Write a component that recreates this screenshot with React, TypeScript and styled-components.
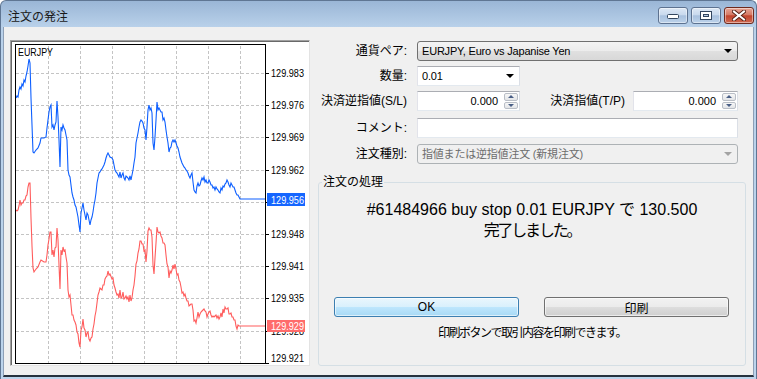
import styled, { createGlobalStyle } from "styled-components";

const UI = `"Liberation Sans", "Noto Sans CJK JP", sans-serif`;

const GlobalStyle = createGlobalStyle`
  html, body { margin: 0; padding: 0; background: #fff; }
  body { font-family: ${UI}; }
  * { box-sizing: border-box; }
`;

// chart data (page coordinates)
const BLUE: [number, number][] = [
  [16,98],[17,96],[18,97],[19,90],[20,87],[21,89],[22,84],[23,86],[24,80],[25,82],[26,76],[27,72],[28,66],[29,59],[30,63],[31,98],[32,125],[33,152],[34,153],[36,150],[38,148],[40,143],[41,138],[44,138],[46,137],[47,128],[48,120],[49,112],[50,107],[51,105],[52,127],[53,125],[54,130],[55,125],[56,122],[57,101],[58,117],[59,140],[60,167],[61,127],[62,130],[63,125],[64,128],[65,130],[66,135],[67,140],[68,170],[69,175],[70,177],[71,185],[72,193],[73,197],[74,200],[75,205],[76,207],[77,212],[78,217],[79,225],[80,232],[81,213],[82,208],[83,203],[84,210],[85,215],[86,220],[87,213],[88,215],[89,220],[90,225],[91,220],[92,217],[93,212],[94,205],[95,200],[96,193],[97,183],[98,178],[99,173],[100,172],[101,170],[102,169],[103,167],[104,165],[105,162],[106,158],[107,155],[108,153],[109,155],[110,157],[112,158],[113,160],[114,165],[115,170],[116,172],[117,173],[118,175],[119,177],[120,172],[121,178],[122,175],[123,173],[124,178],[125,180],[126,176],[127,177],[128,178],[129,180],[130,176],[131,180],[132,175],[133,170],[134,163],[135,157],[136,143],[137,138],[138,133],[139,127],[140,122],[141,120],[142,121],[143,123],[144,128],[145,130],[146,140],[147,127],[148,110],[149,105],[150,110],[151,108],[152,113],[153,143],[154,150],[155,137],[156,120],[157,102],[158,110],[159,108],[160,110],[161,112],[162,112],[163,120],[164,118],[165,122],[166,130],[167,137],[168,143],[169,152],[170,148],[171,147],[172,142],[173,140],[174,142],[175,140],[176,143],[177,146],[178,148],[179,152],[180,157],[181,160],[182,163],[183,165],[184,167],[185,168],[186,170],[187,171],[188,173],[189,176],[190,178],[191,175],[192,173],[193,182],[194,190],[195,192],[196,193],[197,186],[198,183],[199,186],[200,185],[201,181],[202,178],[203,180],[204,177],[205,182],[206,180],[207,183],[208,183],[209,180],[210,182],[211,185],[212,185],[213,188],[214,187],[215,190],[216,187],[217,189],[218,190],[219,192],[220,193],[221,188],[222,190],[223,186],[224,187],[225,184],[226,183],[227,180],[228,182],[229,185],[230,187],[231,183],[232,185],[233,187],[234,187],[235,190],[236,193],[237,195],[238,195],[239,197],[240,199],[265,199],
];

const SPREAD: [number, number][] = [
  [16,112],[29,123],[33,117],[50,127],[80,117],[150,122],[208,132],[223,124],[236,133],[240,127],[265,127],
];

const spreadAt = (x: number) => {
  for (let i = 0; i < SPREAD.length - 1; i++) {
    const [x0, o0] = SPREAD[i];
    const [x1, o1] = SPREAD[i + 1];
    if (x >= x0 && x <= x1) return o0 + ((o1 - o0) * (x - x0)) / (x1 - x0);
  }
  return 127;
};

const RED = BLUE.map(([x, y]) => [x, Math.round(y + spreadAt(x) + (x < 238 ? ((x * 7) % 5) - 2 : 0))]);

const toPoints = (pts: number[][]) => pts.map((p) => p.join(",")).join(" ");

// null = level whose label sits fully under the current-price tag
const PRICES = ["129.983", "129.976", "129.969", "129.962", null, "129.948", "129.941", "129.935", "129.928", "129.921"];
const GRID_X = [48, 80, 112, 144, 176, 208, 240];
const levelY = (i: number) => Math.round(73 + i * 32.2);

const Chart = () => (
  <svg width="298" height="324" style={{ display: "block" }}>
    <defs>
      <clipPath id="plot">
        <rect x="16" y="45" width="249" height="318" />
      </clipPath>
    </defs>
    <g transform="translate(-11,-41)">
      <g stroke="#c4c4c4" strokeDasharray="3 2" strokeWidth="1">
        {GRID_X.map((x) => (
          <line key={x} x1={x + 0.5} y1="46" x2={x + 0.5} y2="363" />
        ))}
        {PRICES.slice(0, 9).map((_, i) => (
          <line key={i} x1="16" y1={levelY(i) + 0.5} x2="265" y2={levelY(i) + 0.5} />
        ))}
      </g>
      <g clipPath="url(#plot)" fill="none" strokeWidth="1.1">
        <polyline points={toPoints(BLUE)} stroke="#0d5fff" />
        <polyline points={toPoints(RED)} stroke="#ff5c5c" />
      </g>
      <rect x="15.5" y="44.5" width="250" height="319" fill="none" stroke="#000" />
      <text x="18" y="52" fontSize="10.5" fontFamily="Liberation Sans, sans-serif" dominantBaseline="central" textLength="35" lengthAdjust="spacingAndGlyphs">EURJPY</text>
      {PRICES.map((p, i) => (
        <g key={i}>
          <line x1="265" y1={levelY(i) + 0.5} x2="269" y2={levelY(i) + 0.5} stroke="#000" />
          {p && (
            <text x="271" y={Math.min(levelY(i), 358)} fontSize="10.5" fontFamily="Liberation Sans, sans-serif" dominantBaseline="central" textLength="33" lengthAdjust="spacingAndGlyphs">{p}</text>
          )}
        </g>
      ))}
      <rect x="267" y="193" width="38" height="13" fill="#1566ff" />
      <text x="271" y="199.5" fontSize="10.5" fill="#fff" fontFamily="Liberation Sans, sans-serif" dominantBaseline="central" textLength="33" lengthAdjust="spacingAndGlyphs">129.956</text>
      <rect x="267" y="320" width="38" height="12" fill="#ff6b6b" />
      <text x="271" y="326" fontSize="10.5" fill="#fff" fontFamily="Liberation Sans, sans-serif" dominantBaseline="central" textLength="33" lengthAdjust="spacingAndGlyphs">129.929</text>
    </g>
  </svg>
);

const MinIcon = () => (
  <svg width="12" height="6" viewBox="0 0 12 6">
    <rect x="0.5" y="0.5" width="11" height="4" rx="1" fill="#fff" stroke="#33465f" />
  </svg>
);

const MaxIcon = () => (
  <svg width="12" height="9" viewBox="0 0 12 9">
    <rect x="0.5" y="0.5" width="11" height="8" fill="#fff" stroke="#33465f" />
    <rect x="3.5" y="3.5" width="5" height="2" fill="#b7cbe3" stroke="#33465f" />
  </svg>
);

const CloseIcon = () => (
  <svg width="14" height="11" viewBox="0 0 14 11">
    <path d="M2 1.5 L12 9.5 M12 1.5 L2 9.5" stroke="#5a2418" strokeWidth="4" strokeLinecap="square" />
    <path d="M2 1.5 L12 9.5 M12 1.5 L2 9.5" stroke="#fff" strokeWidth="2" strokeLinecap="square" />
  </svg>
);

export default function App() {
  return (
    <>
      <GlobalStyle />
      <Window>
        <TitleBar>
          <Title>注文の発注</Title>
          <CaptionButtons>
            <CaptionButton $close={false} $align="end">
              <MinIcon />
            </CaptionButton>
            <CaptionButton $close={false} $align="center">
              <MaxIcon />
            </CaptionButton>
            <CaptionButton $close $align="center">
              <CloseIcon />
            </CaptionButton>
          </CaptionButtons>
        </TitleBar>
        <Client>
          <ChartPanel>
            <Chart />
          </ChartPanel>
          <FormColumn>
            <Row>
              <Label>通貨ペア:</Label>
              <Combo $kind="button">
                <span>EURJPY, Euro vs Japanise Yen</span>
                <Caret $color="#000" />
              </Combo>
            </Row>
            <Row $top={5}>
              <Label>数量:</Label>
              <Combo $kind="edit" $width={103}>
                <span>0.01</span>
                <Caret $color="#000" />
              </Combo>
            </Row>
            <Row $top={5}>
              <Label>決済逆指値(S/L)</Label>
              <SpinBox $width={103}>
                <SpinValue>0.000</SpinValue>
                <Spinner>
                  <SpinHalf>
                    <SpinArrow $up />
                  </SpinHalf>
                  <SpinHalf>
                    <SpinArrow $up={false} />
                  </SpinHalf>
                </Spinner>
              </SpinBox>
              <SideLabel>決済指値(T/P)</SideLabel>
              <SpinBox $width={105}>
                <SpinValue>0.000</SpinValue>
                <Spinner>
                  <SpinHalf>
                    <SpinArrow $up />
                  </SpinHalf>
                  <SpinHalf>
                    <SpinArrow $up={false} />
                  </SpinHalf>
                </Spinner>
              </SpinBox>
            </Row>
            <Row $top={7}>
              <Label>コメント:</Label>
              <TextBox />
            </Row>
            <Row $top={6}>
              <Label>注文種別:</Label>
              <Combo $kind="disabled">
                <span>指値または逆指値注文 (新規注文)</span>
                <Caret $color="#a3a3a3" />
              </Combo>
            </Row>
            <GroupBox>
              <Legend>注文の処理</Legend>
              <Message>
                <div>#61484966 buy stop 0.01 EURJPY で 130.500</div>
                <Done>完了しました。</Done>
              </Message>
              <ButtonRow>
                <PushButton $primary>OK</PushButton>
                <PushButton $primary={false}>印刷</PushButton>
              </ButtonRow>
              <Hint>印刷ボタンで取引内容を印刷できます。</Hint>
            </GroupBox>
          </FormColumn>
        </Client>
      </Window>
    </>
  );
}

const Window = styled.div`
  width: 757px;
  height: 379px;
  border: 1px solid #5f7693;
  border-bottom: none;
  border-radius: 6px 6px 0 0;
  background: linear-gradient(#9ab6d6 0px, #b9d1ea 26px, #bcd4ec 100%);
  display: flex;
  flex-direction: column;
  overflow: hidden;
`;

const TitleBar = styled.div`
  height: 26px;
  flex: none;
  display: flex;
  justify-content: space-between;
  align-items: flex-start;
  padding-left: 7px;
`;

const Title = styled.div`
  font-family: "Noto Sans CJK JP", sans-serif;
  font-size: 12px;
  line-height: 16px;
  padding-top: 7px;
  color: #1a1a1a;
`;

const CaptionButtons = styled.div`
  display: flex;
  gap: 3px;
  margin-top: 6px;
  margin-right: 2px;
`;

const CaptionButton = styled.div<{ $close: boolean; $align: "end" | "center" }>`
  width: 30px;
  height: 17px;
  border-radius: 3px;
  border: 1px solid ${(p) => (p.$close ? "#6e2a1e" : "#5d7290")};
  background: ${(p) =>
    p.$close
      ? "linear-gradient(#e6a596 0%, #d67b66 45%, #c2442d 52%, #cf6a52 100%)"
      : "linear-gradient(#dde8f5 0%, #c9d9ed 45%, #a9c1de 52%, #bcd2ea 100%)"};
  box-shadow: inset 0 0 0 1px rgba(255, 255, 255, 0.45);
  display: flex;
  justify-content: center;
  align-items: ${(p) => (p.$align === "end" ? "flex-end" : "center")};
  padding-bottom: ${(p) => (p.$align === "end" ? "3px" : "0")};
`;

const Client = styled.div`
  flex: 1;
  margin: 0 2px 2px 2px;
  background: #f0f0f0;
  border: 1px solid #8d9fb6;
  border-top: none;
  border-bottom: 2px solid #26313d;
  display: flex;
  gap: 8px;
  padding: 13px 7px 9px 6px;
`;

const ChartPanel = styled.div`
  width: 300px;
  flex: none;
  background: #fff;
  border: 1px solid;
  border-color: #a0a0a0 #e3e3e3 #e3e3e3 #a0a0a0;
  box-shadow: inset 1px 1px 0 #696969;
  overflow: hidden;
`;

const FormColumn = styled.div`
  width: 428px;
  display: flex;
  flex-direction: column;
  padding-top: 1px;
`;

const Row = styled.div<{ $top?: number }>`
  display: flex;
  align-items: stretch;
  height: 20px;
  flex: none;
  margin-top: ${(p) => p.$top ?? 0}px;
  padding-right: 8px;
`;

const Label = styled.div`
  flex: none;
  width: 89px;
  margin-right: 10px;
  text-align: right;
  font-size: 12px;
  line-height: 20px;
  white-space: nowrap;
  color: #000;
`;

const SideLabel = styled(Label)`
  flex: 1;
  width: auto;
  margin-right: 8px;
`;

const Combo = styled.div<{ $kind: "button" | "edit" | "disabled"; $width?: number }>`
  flex: ${(p) => (p.$width ? "none" : "1")};
  width: ${(p) => (p.$width ? `${p.$width}px` : "auto")};
  display: flex;
  align-items: center;
  justify-content: space-between;
  padding: 0 3px 0 3px;
  font-size: 11px;
  line-height: 18px;
  white-space: nowrap;
  color: ${(p) => (p.$kind === "disabled" ? "#6d6d6d" : "#000")};
  border: 1px solid;
  border-radius: ${(p) => (p.$kind === "edit" ? "0" : "3px")};
  border-color: ${(p) =>
    p.$kind === "button" ? "#707070" : p.$kind === "disabled" ? "#adb2b5" : "#abadb3 #dbdfe6 #e3e9ef #e2e3ea"};
  background: ${(p) =>
    p.$kind === "button"
      ? "linear-gradient(#f4f4f4 0%, #ececec 50%, #e0e0e0 51%, #d8d8d8 100%)"
      : p.$kind === "disabled"
        ? "#f0f0f0"
        : "#fff"};
  & > span {
    padding-left: 1px;
    letter-spacing: -0.2px;
  }
`;

const Caret = styled.i<{ $color: string }>`
  width: 0;
  height: 0;
  margin-right: 2px;
  border-left: 4px solid transparent;
  border-right: 4px solid transparent;
  border-top: 4px solid ${(p) => p.$color};
`;

const SpinBox = styled.div<{ $width: number }>`
  flex: none;
  width: ${(p) => p.$width}px;
  display: flex;
  background: #fff;
  border: 1px solid;
  border-color: #abadb3 #dbdfe6 #e3e9ef #e2e3ea;
`;

const SpinValue = styled.div`
  flex: 1;
  text-align: right;
  padding-right: 6px;
  font-size: 11px;
  line-height: 18px;
  color: #000;
`;

const Spinner = styled.div`
  width: 15px;
  display: flex;
  flex-direction: column;
  gap: 1px;
  padding: 1px 1px 1px 0;
`;

const SpinHalf = styled.div`
  flex: 1;
  display: flex;
  align-items: center;
  justify-content: center;
  border: 1px solid #b9bec6;
  border-radius: 2px;
  background: linear-gradient(#f7f7f7, #e3e5e8);
`;

const SpinArrow = styled.i<{ $up: boolean }>`
  width: 0;
  height: 0;
  border-left: 3px solid transparent;
  border-right: 3px solid transparent;
  ${(p) => (p.$up ? "border-bottom: 3px solid #4a5f86;" : "border-top: 3px solid #4a5f86;")}
`;

const TextBox = styled.div`
  flex: 1;
  background: #fff;
  border: 1px solid;
  border-color: #abadb3 #dbdfe6 #e3e9ef #e2e3ea;
`;

const GroupBox = styled.fieldset`
  flex: 1;
  margin: 11px 0 0 0;
  padding: 0;
  min-width: 0;
  border: 1px solid #d5dfe5;
  border-radius: 3px;
  display: flex;
  flex-direction: column;
  align-items: stretch;
`;

const Legend = styled.legend`
  margin-left: 3px;
  padding: 0 1px;
  font-size: 12px;
  line-height: 14px;
  color: #000;
`;

const Message = styled.div`
  margin-top: 10px;
  text-align: center;
  font-size: 16px;
  line-height: 21px;
  color: #000;
`;

const Done = styled.div`
  letter-spacing: -2.2px;
`;

const ButtonRow = styled.div`
  margin-top: 56px;
  display: grid;
  grid-template-columns: 185px 185px;
  column-gap: 25px;
  padding-left: 15px;
  height: 20px;
`;

const PushButton = styled.div<{ $primary: boolean }>`
  display: flex;
  align-items: center;
  justify-content: center;
  font-size: 12px;
  color: #000;
  border-radius: 3px;
  border: 1px solid ${(p) => (p.$primary ? "#3c7fb1" : "#707070")};
  background: ${(p) =>
    p.$primary
      ? "linear-gradient(#eaf6fd 0%, #d9f0fc 50%, #bee6fd 51%, #a7d9f5 100%)"
      : "linear-gradient(#f2f2f2 0%, #ebebeb 50%, #dddddd 51%, #cfcfcf 100%)"};
  box-shadow: inset 0 0 0 1px rgba(255, 255, 255, 0.6);
`;

const Hint = styled.div`
  margin-top: 8px;
  text-align: center;
  font-size: 12px;
  line-height: 16px;
  letter-spacing: -1.5px;
  color: #000;
`;
